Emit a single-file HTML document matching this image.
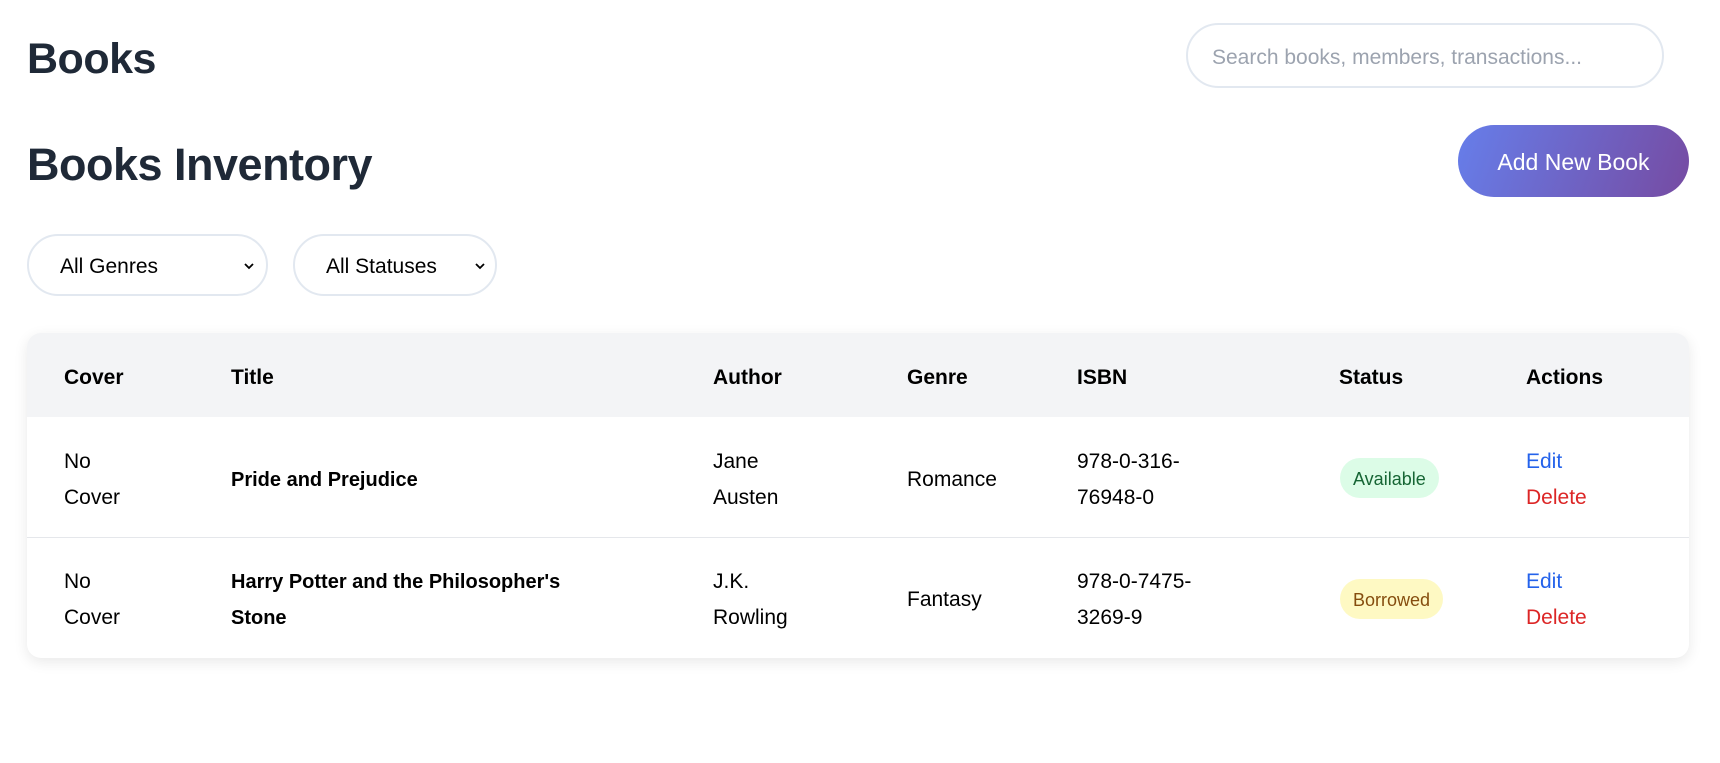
<!DOCTYPE html>
<html><head><meta charset="utf-8"><style>
*{box-sizing:border-box;margin:0;padding:0}
body{width:1720px;height:763px;background:#fff;font-family:"Liberation Sans",sans-serif;position:relative;overflow:hidden;color:#000}
h1{position:absolute;font-size:45px;font-weight:bold;color:#1f2937;left:27px;letter-spacing:-0.5px}
.search{position:absolute;left:1186px;top:23px;width:478px;height:65px;border:2.5px solid #e2e8f0;border-radius:33px;color:#9ca3af;font-size:21px;padding-left:24px;line-height:66px}
.btn{position:absolute;left:1458px;top:125px;width:231px;height:72px;border-radius:36px;background:linear-gradient(110deg,#667eea,#764ba2);color:#fff;font-size:23px;text-align:center;line-height:74px}
.sel{position:absolute;top:234px;height:62px;border:2.5px solid #e2e8f0;border-radius:31px;font-size:21px;line-height:62px;padding-left:31px}
.sel svg{position:absolute;top:25px}
.card{position:absolute;left:27px;top:333px;width:1662px;height:325px;border-radius:14px;box-shadow:0 4px 14px rgba(0,0,0,.09);overflow:hidden;background:#fff}
.hd{position:absolute;left:0;top:0;width:100%;height:84px;background:#f3f4f6}
.th{position:absolute;top:33px;font-weight:bold;font-size:21px}
.td{position:absolute;font-size:21px;line-height:36px;white-space:nowrap}
.b{font-weight:bold;font-size:20px}
.badge{position:absolute;height:40px;border-radius:20px;font-size:18px;line-height:42px;padding:0 13px}
.edit{color:#2563eb}.del{color:#dc2626}
</style></head><body>
<h1 style="top:35px;font-size:43px">Books</h1>
<h1 style="top:139px">Books Inventory</h1>
<div class="search">Search books, members, transactions...</div>
<div class="btn">Add New Book</div>
<div class="sel" style="left:27px;width:241px">All Genres<svg style="left:214px" width="12" height="10" viewBox="0 0 12 10"><path d="M2 3l4 4 4-4" stroke="#000" stroke-width="1.8" fill="none"/></svg></div>
<div class="sel" style="left:293px;width:204px">All Statuses<svg style="left:179px" width="12" height="10" viewBox="0 0 12 10"><path d="M2 3l4 4 4-4" stroke="#000" stroke-width="1.8" fill="none"/></svg></div>
<div class="card">
<div class="hd"></div>
<div class="th" style="left:37px">Cover</div>
<div class="th" style="left:204px">Title</div>
<div class="th" style="left:686px">Author</div>
<div class="th" style="left:880px">Genre</div>
<div class="th" style="left:1050px">ISBN</div>
<div class="th" style="left:1312px">Status</div>
<div class="th" style="left:1499px">Actions</div>
<div style="position:absolute;left:0;top:204px;width:100%;height:1px;background:#e5e7eb"></div>

<div class="td" style="left:37px;top:111px">No<br>Cover</div>
<div class="td b" style="left:204px;top:129px">Pride and Prejudice</div>
<div class="td" style="left:686px;top:111px">Jane<br>Austen</div>
<div class="td" style="left:880px;top:129px">Romance</div>
<div class="td" style="left:1050px;top:111px">978-0-316-<br>76948-0</div>
<div class="badge" style="left:1313px;top:125px;background:#dcfce7;color:#166534">Available</div>
<div class="td edit" style="left:1499px;top:111px">Edit</div>
<div class="td del" style="left:1499px;top:147px">Delete</div>

<div class="td" style="left:37px;top:231px">No<br>Cover</div>
<div class="td b" style="left:204px;top:231px">Harry Potter and the Philosopher's<br>Stone</div>
<div class="td" style="left:686px;top:231px">J.K.<br>Rowling</div>
<div class="td" style="left:880px;top:249px">Fantasy</div>
<div class="td" style="left:1050px;top:231px">978-0-7475-<br>3269-9</div>
<div class="badge" style="left:1313px;top:246px;background:#fef9c3;color:#854d0e">Borrowed</div>
<div class="td edit" style="left:1499px;top:231px">Edit</div>
<div class="td del" style="left:1499px;top:267px">Delete</div>
</div>
</body></html>
